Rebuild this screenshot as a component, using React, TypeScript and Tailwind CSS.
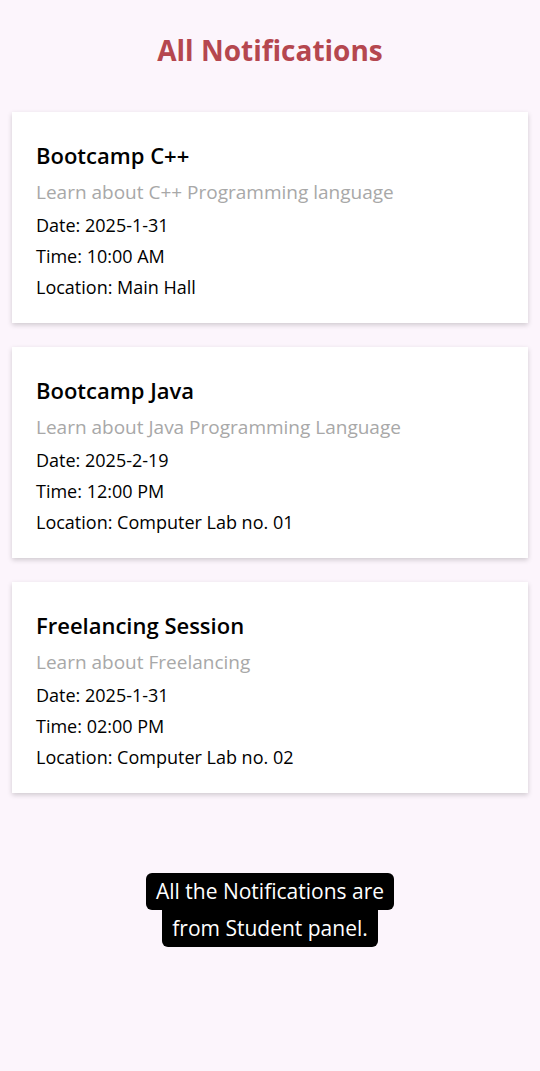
const notifications = [
  {
    title: "Bootcamp C++",
    desc: "Learn about C++ Programming language",
    date: "2025-1-31",
    time: "10:00 AM",
    location: "Main Hall",
  },
  {
    title: "Bootcamp Java",
    desc: "Learn about Java Programming Language",
    date: "2025-2-19",
    time: "12:00 PM",
    location: "Computer Lab no. 01",
  },
  {
    title: "Freelancing Session",
    desc: "Learn about Freelancing",
    date: "2025-1-31",
    time: "02:00 PM",
    location: "Computer Lab no. 02",
  },
];

export default function App() {
  return (
    <div
      className="min-h-[1071px] w-[540px] bg-[#fcf5fc]"
      style={{ fontFamily: "'Open Sans', 'Noto Sans', sans-serif" }}
    >
      <h1 className="pt-[30px] text-center text-[28px] font-bold leading-[40px] text-[#b5474f]">
        All Notifications
      </h1>

      <div className="mx-3 mt-[42px] flex flex-col gap-6">
        {notifications.map((n) => (
          <div key={n.title} className="bg-white px-6 pt-[28px] pb-[20px] shadow-[0_2px_5px_rgba(0,0,0,0.18)]">
            <h2 className="text-[22px] font-semibold leading-[30px] text-black">{n.title}</h2>
            <p className="mt-[5px] text-[19px] leading-[35px] text-[#a8a8a8]">{n.desc}</p>
            <p className="text-[18px] leading-[31px] text-black">Date: {n.date}</p>
            <p className="text-[18px] leading-[31px] text-black">Time: {n.time}</p>
            <p className="text-[18px] leading-[31px] text-black">Location: {n.location}</p>
          </div>
        ))}
      </div>

      <div className="mt-[80px] flex flex-col items-center text-[21px] leading-[37px] text-white">
        <div className="rounded-md bg-black px-[10px]">All the Notifications are</div>
        <div className="rounded-b-md bg-black px-[10px]">from Student panel.</div>
      </div>
    </div>
  );
}
